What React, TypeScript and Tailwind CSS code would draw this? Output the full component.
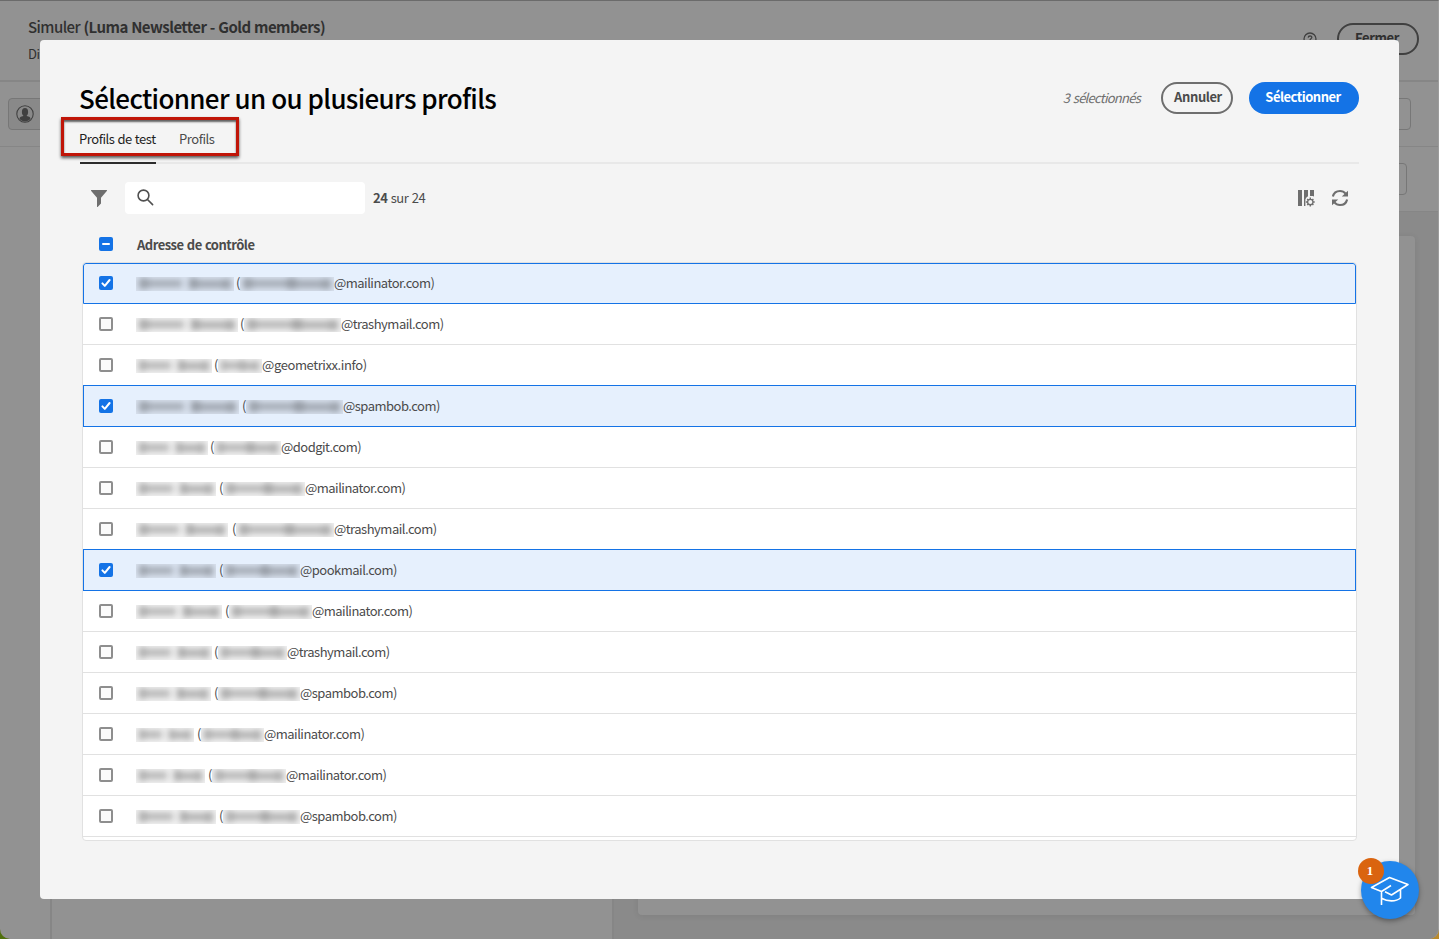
import type { ReactNode } from "react";

type Profile = { name: string; gap: string; mail: string; domain: string; selected?: boolean; tracking?: string };

const profiles: Profile[] = [
  { name: "w-[98px]", gap: "ml-[2px]", mail: "w-[94px]", domain: "@mailinator.com)", selected: true },
  { name: "w-[102px]", gap: "ml-[2px]", mail: "w-[97px]", domain: "@trashymail.com)" },
  { name: "w-[76px]", gap: "ml-[2px]", mail: "w-[44px]", domain: "@geometrixx.info)", tracking: "tracking-[-0.4px]" },
  { name: "w-[103px]", gap: "ml-[3px]", mail: "w-[97px]", domain: "@spambob.com)", selected: true },
  { name: "w-[72px]", gap: "ml-[2px]", mail: "w-[67px]", domain: "@dodgit.com)" },
  { name: "w-[80px]", gap: "ml-[3px]", mail: "w-[82px]", domain: "@mailinator.com)" },
  { name: "w-[92px]", gap: "ml-[4px]", mail: "w-[98px]", domain: "@trashymail.com)" },
  { name: "w-[80px]", gap: "ml-[3px]", mail: "w-[77px]", domain: "@pookmail.com)", selected: true },
  { name: "w-[86px]", gap: "ml-[3px]", mail: "w-[83px]", domain: "@mailinator.com)" },
  { name: "w-[76px]", gap: "ml-[2px]", mail: "w-[69px]", domain: "@trashymail.com)" },
  { name: "w-[75px]", gap: "ml-[3px]", mail: "w-[82px]", domain: "@spambob.com)" },
  { name: "w-[58px]", gap: "ml-[3px]", mail: "w-[63px]", domain: "@mailinator.com)" },
  { name: "w-[69px]", gap: "ml-[3px]", mail: "w-[74px]", domain: "@mailinator.com)" },
  { name: "w-[80px]", gap: "ml-[3px]", mail: "w-[77px]", domain: "@spambob.com)" },
];

function Checkbox({ state }: { state: "on" | "off" | "mixed" }) {
  if (state === "off") {
    return <span className="size-[14px] shrink-0 rounded-[2px] border-2 border-[#8e8e8e] bg-[#fbfbfb]" />;
  }
  return (
    <span className="flex size-[14px] shrink-0 items-center justify-center rounded-[2px] bg-[#1473e6]">
      <svg viewBox="0 0 14 14" className="size-[14px]" fill="none" stroke="#fff" strokeWidth="2" strokeLinecap="round">
        {state === "on" ? <path d="M3.4 7.4 5.8 9.9 10.6 4" strokeLinejoin="round" /> : <path d="M4 7H10" />}
      </svg>
    </span>
  );
}

/** Redacted text: a soft grey smudge clipped to its box. */
function Redacted({ className, words }: { className: string; words?: boolean }) {
  return (
    <span className={`mt-px flex h-[14px] shrink-0 items-center overflow-hidden bg-black/[0.05] ${className}`}>
      <span className="flex h-full w-full items-center px-[3px] blur-[3px]">
        <span className="h-[11px] flex-[1] bg-black/[0.3]" />
        <span className="h-[7px] flex-[4] bg-black/[0.26]" />
        <span className={words ? "w-[7px]" : "hidden"} />
        <span className="h-[11px] flex-[1] bg-black/[0.32]" />
        <span className="h-[8px] flex-[3] bg-black/[0.26]" />
        <span className="h-[10px] flex-[1] bg-black/[0.3]" />
      </span>
    </span>
  );
}

function Row({ p, first }: { p: Profile; first: boolean }) {
  const look = p.selected
    ? first
      ? "h-[41px] rounded-t-[3px] border border-[#1473e6] bg-[#e6f0fd] pb-px pl-[15px]"
      : "-mt-px h-[42px] border border-[#1473e6] bg-[#e6f0fd] pl-[15px]"
    : "h-[41px] border-b border-[#e1e1e1] bg-white pl-4";
  return (
    <div className={`relative flex shrink-0 items-center ${look}`}>
      <Checkbox state={p.selected ? "on" : "off"} />
      <div className={`ml-[23px] flex items-center text-[13px] leading-5 text-[#4b4b4b] ${p.tracking ?? "tracking-[-0.5px]"}`}>
        <Redacted className={p.name} words />
        <span className={p.gap}>(</span>
        <Redacted className={p.mail} />
        <span>{p.domain}</span>
      </div>
    </div>
  );
}

function Pill({ children, className }: { children: ReactNode; className: string }) {
  return (
    <button className={`flex h-8 items-center justify-center rounded-full pb-[2px] text-[13px] leading-4 font-bold ${className}`}>
      {children}
    </button>
  );
}

function Page() {
  return (
    <div className="flex h-[939px] w-full flex-col overflow-hidden rounded-b-[10px] border-t border-r border-t-[#6b6b6b] border-r-[#9c9c9c] bg-[#929292] text-[#303030]">
      <header className="flex h-[81px] shrink-0 items-start justify-between border-b-2 border-[#868686] pl-[28px] pr-[19px]">
        <div>
          <h1 className="mt-[14px] text-[15px] leading-6 font-bold tracking-[-0.56px] [word-spacing:0.6px]">
            <span className="font-medium">Simuler</span> (Luma Newsletter - Gold members)
          </h1>
          <p className="mt-[5px] text-[13px] leading-5 tracking-[-0.4px]">Différents profils</p>
        </div>
        <div className="flex items-center gap-5 pt-[22px]">
          <svg viewBox="0 0 14 14" className="size-[14px]" fill="none" stroke="#404040" strokeWidth="1.3">
            <circle cx="7" cy="7" r="6" />
            <path d="M5.2 5.6C5.3 3.4 8.9 3.5 8.8 5.5 8.7 6.8 7 6.6 7 8.2M7 9.4V10.6" />
          </svg>
          <Pill className="w-[82px] border-2 border-[#404040] pr-[2px] tracking-[-0.4px]">Fermer</Pill>
        </div>
      </header>
      <div className="flex h-[65px] shrink-0 items-center justify-between border-b border-[#868686] pl-2 pr-[27px]">
        <div className="flex h-8 w-20 items-center rounded border border-[#777] bg-[#898989] pl-[7px]">
          <svg viewBox="0 0 18 18" className="size-[18px]" fill="#404040">
            <circle cx="9" cy="9" r="8.2" fill="none" stroke="#404040" strokeWidth="1.1" />
            <ellipse cx="9" cy="7" rx="3.1" ry="3.9" />
            <path d="M7.4 9.5h3.2v1.6c3 .6 3.7 1.2 3.9 2.6C13 15.6 11 16.4 9 16.4S5 15.6 3.5 13.7c.2-1.4.9-2 3.9-2.6z" />
          </svg>
        </div>
        <div className="h-8 w-40 rounded border border-[#777]" />
      </div>
      <div className="flex min-h-0 flex-1">
        <div className="w-[50px] shrink-0" />
        <div className="w-[564px] shrink-0 border-x-2 border-[#868686]" />
        <div className="flex min-w-0 flex-1 flex-col">
          <div className="flex h-[65px] shrink-0 items-center justify-end border-b border-[#868686] pr-[31px]">
            <div className="h-8 w-40 rounded border border-[#777]" />
          </div>
          <div className="flex-1 bg-[#8a8a8a] pt-[24px] pr-[23px] pb-[24px] pl-[24px]">
            <div className="h-full rounded bg-[#929292] shadow-[0_1px_6px_rgba(0,0,0,0.08)]" />
          </div>
        </div>
      </div>
    </div>
  );
}

function FunnelIcon() {
  return (
    <svg viewBox="0 0 16 17" className="h-[17px] w-4" fill="#6e6e6e">
      <path d="M.6 0h14.8a.5.5 0 0 1 .4.9L10 7.8V13.6L6.6 17a.4.4 0 0 1-.6-.3V7.8L.2.9A.5.5 0 0 1 .6 0z" />
    </svg>
  );
}

function ColumnsIcon() {
  return (
    <svg viewBox="0 0 18 18" className="size-[18px]" fill="#6e6e6e">
      <path d="M1 1h4v16H1zM7 1h4v6.2L9.4 8.4 8.4 10.2V17H7zM13 1h4v6.6L15.6 7 13 7z" />
      <circle cx="13.3" cy="13" r="2.7" fill="none" stroke="#6e6e6e" strokeWidth="1.3" />
      <path
        d="M13.3 8.6v1.6M13.3 15.8v1.6M8.9 13h1.6M16.1 13h1.6M10.2 9.9l1.1 1.1M15.3 15l1.1 1.1M10.2 16.1l1.1-1.1M15.300 11l1.100-1.100"
        stroke="#6e6e6e"
        strokeWidth="1.4"
      />
    </svg>
  );
}

function RefreshIcon() {
  return (
    <svg viewBox="0 0 18 18" className="size-[18px]" fill="#6e6e6e">
      <path
        d="M1.900 7.600C2.700 4 5.500 2 9 2c2.500 0 4.300 1 5.600 2.600M16.100 10.400C15.300 14 12.500 16 9 16c-2.500 0-4.300-1-5.600-2.600"
        fill="none"
        stroke="#6e6e6e"
        strokeWidth="2.100"
      />
      <path d="M17 1.800V7.600h-6.200zM1 16.200V10.400h6.200z" />
    </svg>
  );
}

function Dialog() {
  return (
    <section className="absolute top-10 left-10 flex h-[859px] w-[1359px] flex-col rounded bg-[#f4f4f4] px-10">
      <div className="mt-[42px] flex h-8 items-center">
        <h2 className="-ml-px pb-px text-[26px] leading-8 font-medium tracking-[-0.65px] text-black [word-spacing:0.4px]">
          Sélectionner un ou plusieurs profils
        </h2>
        <span className="ml-auto text-[13px] leading-4 tracking-[-0.75px] text-[#6e6e6e] italic [word-spacing:1.5px]">3 sélectionnés</span>
        <Pill className="ml-[21px] w-[72px] border-2 border-[#6e6e6e] pl-[2px] tracking-[-0.4px] text-[#4b4b4b]">Annuler</Pill>
        <Pill className="ml-4 w-[110px] bg-[#1473e6] pr-[2px] tracking-[-0.5px] text-white">Sélectionner</Pill>
      </div>
      <nav className="flex h-[50px] shrink-0 items-stretch border-b-2 border-[#e8e8e8] text-[13px] leading-5 tracking-[-0.46px]">
        <span className="-mb-[2px] w-[76px] border-b-2 border-[#2c2c2c] pt-[15px] whitespace-nowrap text-[#1f1f1f] [word-spacing:0.6px]">
          <span className="-ml-px">Profils de test</span>
        </span>
        <span className="ml-[23px] pt-[15px] text-[#4b4b4b]">Profils</span>
      </nav>
      <div className="mt-[18px] flex h-8 shrink-0 items-center pl-[11px]">
        <FunnelIcon />
        <div className="ml-[18px] flex h-8 w-60 items-center rounded bg-white pb-[2px] pl-3">
          <svg viewBox="0 0 17 17" className="size-[17px]" fill="none" stroke="#505050" strokeWidth="1.6" strokeLinecap="round">
            <circle cx="6.5" cy="6.5" r="5.4" />
            <path d="M10.500 10.500 15.600 15.600" />
          </svg>
        </div>
        <span className="ml-2 text-[13px] leading-5 tracking-[-0.5px] text-[#4b4b4b] [word-spacing:1px]">
          <b>24</b> sur 24
        </span>
        <div className="ml-auto flex items-center gap-4 pr-[10px]">
          <ColumnsIcon />
          <RefreshIcon />
        </div>
      </div>
      <div className="ml-[2px] flex w-[1275px] shrink-0 flex-col">
        <div className="flex h-[48px] items-center pt-[12px] pl-[17px]">
          <Checkbox state="mixed" />
          <span className="ml-6 pt-[2px] text-[13px] leading-5 font-bold tracking-[-0.52px] text-[#4b4b4b] [word-spacing:0.8px]">
            Adresse de contrôle
          </span>
        </div>
        <div className="flex h-[579px] flex-col overflow-hidden rounded border border-[#e1e1e1] bg-white">
          {profiles.map((p, i) => (
            <Row key={i} p={p} first={i === 0} />
          ))}
        </div>
      </div>
    </section>
  );
}

function HelpBubble() {
  return (
    <div className="absolute top-[861px] left-[1361px] flex size-[58px] items-center justify-center rounded-full bg-[#2186ec] shadow-[0_2px_5px_rgba(0,0,0,0.35)]">
      <svg viewBox="0 0 58 58" className="size-[58px]" fill="none" stroke="#fff" strokeWidth="1.6" strokeLinejoin="round">
        <path d="M30 24.500 20.500 30.500 10.500 26.500 28.500 16.500 47 23.500 30.500 34 24 30.800M20.500 30.500V44M21 37.500C26 40.500 35 41 39.500 37V29" />
      </svg>
      <span className="absolute -top-[3px] -left-[3px] flex size-[26px] items-center justify-center rounded-full bg-[#da640f] pr-[2px] font-['Liberation_Serif',serif] text-[13px] leading-4 font-bold text-white">
        1
      </span>
    </div>
  );
}

export default function App() {
  return (
    <main className="relative h-[939px] w-[1439px] overflow-hidden bg-linear-to-r from-[#50700c] from-50% to-[#b98a2c] to-50% font-['Noto_Sans_CJK_SC','Noto_Sans',sans-serif]">
      <Page />
      <Dialog />
      <div className="absolute top-[117px] left-[61px] h-[39px] w-[178px] border-[3px] border-[#c01508] shadow-[0_2px_3px_rgba(0,0,0,0.65),inset_0_2px_2px_rgba(0,0,0,0.6)]" />
      <HelpBubble />
    </main>
  );
}
